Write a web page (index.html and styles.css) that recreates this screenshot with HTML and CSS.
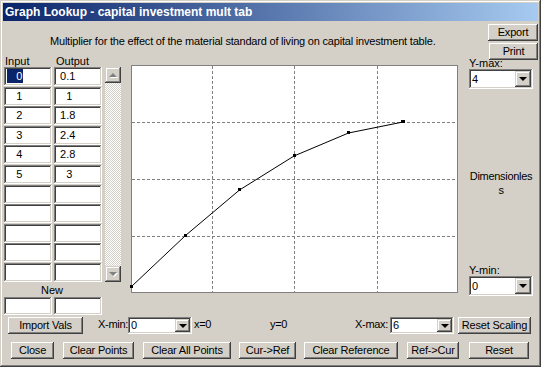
FILE: index.html
```html
<!DOCTYPE html>
<html>
<head>
	<title>Graph Lookup</title>
	<link rel="stylesheet" href="styles.css">
</head>
<body>
	<div id="window">
		<div id="titlebar">Graph Lookup - capital investment mult tab</div>
		<div id="content">
			<div id="leftside">
				<div id="description">Multiplier for the effect of the material standard of living on capital investment table.</div>
				<div id="main">
					<div id="table">
						<div class="heads"><span class="head-in">Input</span><span class="head-out">Output</span></div>
						<div id="gridwrap">
							<div id="cells">
								<div class="cell"><span class="selected">   0</span></div><div class="cell"> 0.1</div>
								<div class="cell">   1</div><div class="cell">   1</div>
								<div class="cell">   2</div><div class="cell"> 1.8</div>
								<div class="cell">   3</div><div class="cell"> 2.4</div>
								<div class="cell">   4</div><div class="cell"> 2.8</div>
								<div class="cell">   5</div><div class="cell">   3</div>
								<div class="cell"></div><div class="cell"></div>
								<div class="cell"></div><div class="cell"></div>
								<div class="cell"></div><div class="cell"></div>
								<div class="cell"></div><div class="cell"></div>
								<div class="cell"></div><div class="cell"></div>
							</div>
							<div class="scrollbar">
								<div class="scrollbtn"><span class="tri-up"></span></div>
								<div class="scrollbtn"><span class="tri-down"></span></div>
							</div>
						</div>
						<div class="newlabel">New</div>
						<div class="newcells"><div class="cell"></div><div class="cell"></div></div>
					</div>
					<div id="graph">
						<svg width="327" height="228" viewBox="0 0 327 228">
							<rect x="0.5" y="0.5" width="326" height="227" fill="#fff" stroke="#808080"/>
							<g stroke="#808080" stroke-dasharray="3 2" fill="none">
								<line x1="81.5" y1="1" x2="81.5" y2="227"/>
								<line x1="163.5" y1="1" x2="163.5" y2="227"/>
								<line x1="246.5" y1="1" x2="246.5" y2="227"/>
								<line x1="1" y1="57.5" x2="326" y2="57.5"/>
								<line x1="1" y1="114.5" x2="326" y2="114.5"/>
								<line x1="1" y1="171.5" x2="326" y2="171.5"/>
							</g>
							<polyline points="0.5,221.5 54.5,170.5 108.5,125 163,91 217.5,68 272,57" fill="none" stroke="#000"/>
							<g fill="#000">
								<rect x="-1" y="220" width="3" height="3"/>
								<rect x="53" y="169" width="3" height="3"/>
								<rect x="107" y="123" width="3" height="3"/>
								<rect x="162" y="89" width="3" height="3"/>
								<rect x="216" y="66" width="3" height="3"/>
								<rect x="270" y="55" width="4" height="3"/>
							</g>
						</svg>
					</div>
				</div>
			</div>
			<div id="rightside">
				<button class="btn btn-export">Export</button>
				<button class="btn btn-print">Print</button>
				<div class="sidelabel">Y-max:</div>
				<div class="combo combo-big"><span class="combo-val">4</span><span class="dropbtn"><span class="tri-black"></span></span></div>
				<div class="units">Dimensionles<br>s</div>
				<div class="sidelabel ymin">Y-min:</div>
				<div class="combo combo-big"><span class="combo-val">0</span><span class="dropbtn"><span class="tri-black"></span></span></div>
			</div>
		</div>
		<div class="buttonrow row1">
			<button class="btn b-import">Import Vals</button>
			<span class="lbl lbl-xmin">X-min:</span>
			<div class="combo combo-small"><span class="combo-val">0</span><span class="dropbtn"><span class="tri-black"></span></span></div>
			<span class="lbl xval">x=0</span>
			<span class="lbl yval">y=0</span>
			<span class="lbl lbl-xmax">X-max:</span>
			<div class="combo combo-small"><span class="combo-val">6</span><span class="dropbtn"><span class="tri-black"></span></span></div>
			<button class="btn b-rescale">Reset Scaling</button>
		</div>
		<div class="buttonrow row2">
			<button class="btn b-close">Close</button>
			<button class="btn b-clearpts">Clear Points</button>
			<button class="btn b-clearall">Clear All Points</button>
			<button class="btn b-curref">Cur-&gt;Ref</button>
			<button class="btn b-clearref">Clear Reference</button>
			<button class="btn b-refcur">Ref-&gt;Cur</button>
			<button class="btn b-reset">Reset</button>
		</div>
	</div>
</body>
</html>
```

FILE: styles.css
```css
body {
	margin:0;
	background:#D4D0C8;
	font-family:"Liberation Sans", Arial, sans-serif;
	font-size:11px;
	color:#000;
}
#window {
	width:541px;
	height:367px;
	box-sizing:border-box;
	padding:3px;
	background:#D4D0C8;
	box-shadow:inset -1px -1px #404040, inset 1px 1px #D4D0C8, inset -2px -2px #808080, inset 2px 2px #fff;
}
#titlebar {
	height:18px;
	line-height:18px;
	padding-left:2px;
	font-size:12px;
	font-weight:bold;
	color:#fff;
	background:linear-gradient(to right, #0A246A, #A6CAF0);
}

#content {
	display:flex;
}
#leftside {
	width:466px;
}
#description {
	height:34px;
	box-sizing:border-box;
	padding:14px 0 0 47px;
	line-height:13px;
	letter-spacing:-0.2px;
}
#main {
	display:flex;
}
#table {
	margin-left:1px;
	width:117px;
}
.heads {
	display:flex;
	height:12px;
	line-height:12px;
}
.head-in { width:51px; padding-left:1px; }
.head-out { padding-left:0; }

#gridwrap {
	display:flex;
}
#cells {
	display:grid;
	grid-template-columns:48px 48px;
	grid-auto-rows:19px;
	column-gap:2px;
	row-gap:0.6px;
}
.cell {
	box-sizing:border-box;
	background:#fff;
	box-shadow:inset -1px -1px #fff, inset 1px 1px #808080, inset -2px -2px #D4D0C8, inset 2px 2px #404040;
	padding:2px 0 0 3px;
	line-height:15px;
	white-space:pre;
}
.selected {
	display:inline-block;
	background:#0A246A;
	color:#fff;
	line-height:14px;
	padding-right:1px;
}
.scrollbar {
	margin-left:3px;
	width:16px;
	height:215px;
	display:flex;
	flex-direction:column;
	justify-content:space-between;
	background:repeating-conic-gradient(#fff 0 25%, #D4D0C8 0 50%) 0 0/2px 2px;
}
.scrollbtn {
	width:16px;
	height:16px;
	box-sizing:border-box;
	background:#D4D0C8;
	box-shadow:inset -1px -1px #404040, inset 1px 1px #D4D0C8, inset -2px -2px #808080, inset 2px 2px #fff;
	display:flex;
	align-items:center;
	justify-content:center;
}
.tri-up, .tri-down {
	width:0;
	height:0;
	border-left:4px solid transparent;
	border-right:4px solid transparent;
	filter:drop-shadow(1px 1px 0 #fff);
}
.tri-up { border-bottom:4px solid #808080; }
.tri-down { border-top:4px solid #808080; }

.newlabel {
	height:14px;
	line-height:12px;
	padding:2px 0 0 37px;
	box-sizing:border-box;
}
.newcells {
	display:flex;
	gap:2px;
	margin-top:1px;
}
.newcells .cell {
	width:48px;
	height:18px;
}

#graph {
	margin:10px 0 0 10px;
	height:228px;
}
#graph svg {
	display:block;
	overflow:visible;
}

#rightside {
	width:69px;
	display:flex;
	flex-direction:column;
	align-items:flex-start;
}
.btn {
	font-family:"Liberation Sans", Arial, sans-serif;
	font-size:11px;
	letter-spacing:-0.2px;
	color:#000;
	background:#D4D0C8;
	border:none;
	margin:0;
	padding:0;
	height:17px;
	line-height:15px;
	box-shadow:inset -1px -1px #404040, inset 1px 1px #fff, inset -2px -2px #808080, inset 2px 2px #D4D0C8;
}
.btn-export { margin:3px 0 0 19px; width:50px; }
.btn-print { margin:2px 0 0 20px; width:49px; }
.sidelabel {
	line-height:12px;
	margin-top:-3px;
}
.sidelabel.ymin { margin-top:67px; }
.combo {
	box-sizing:border-box;
	display:flex;
	align-items:center;
	justify-content:space-between;
	background:#fff;
	box-shadow:inset -1px -1px #fff, inset 1px 1px #808080, inset -2px -2px #D4D0C8, inset 2px 2px #404040;
	padding:2px;
}
.combo-big {
	width:64px;
	height:20px;
}
.combo-small {
	width:64px;
	height:17px;
}
.combo-val {
	padding-left:1px;
	line-height:13px;
}
.dropbtn {
	width:16px;
	height:100%;
	box-sizing:border-box;
	background:#D4D0C8;
	box-shadow:inset -1px -1px #404040, inset 1px 1px #D4D0C8, inset -2px -2px #808080, inset 2px 2px #fff;
	display:flex;
	align-items:center;
	justify-content:center;
}
.combo-small .dropbtn { width:15px; }
.tri-black {
	width:0;
	height:0;
	border-left:4px solid transparent;
	border-right:4px solid transparent;
	border-top:4px solid #000;
}
.units {
	margin-top:80px;
	width:64px;
	text-align:center;
	line-height:14px;
	letter-spacing:-0.3px;
}

.buttonrow {
	display:flex;
	align-items:flex-start;
	height:17px;
}
.row1 { margin-top:2px; }
.row2 { margin-top:8px; }
.lbl {
	line-height:15px;
	letter-spacing:-0.3px;
}
.b-import { margin-left:5px; width:75px; }
.lbl-xmin { margin-left:15px; width:30px; }
.xval { margin-left:2px; width:76px; }
.yval { width:85px; }
.lbl-xmax { width:35px; }
.b-rescale { margin-left:4px; width:73px; }

.b-close { margin-left:8px; width:43px; }
.b-clearpts { margin-left:9px; width:71px; }
.b-clearall { margin-left:9px; width:88px; }
.b-curref { margin-left:8px; width:57px; }
.b-clearref { margin-left:8px; width:94px; }
.b-refcur { margin-left:9px; width:52px; }
.b-reset { margin-left:10px; width:60px; }
```
